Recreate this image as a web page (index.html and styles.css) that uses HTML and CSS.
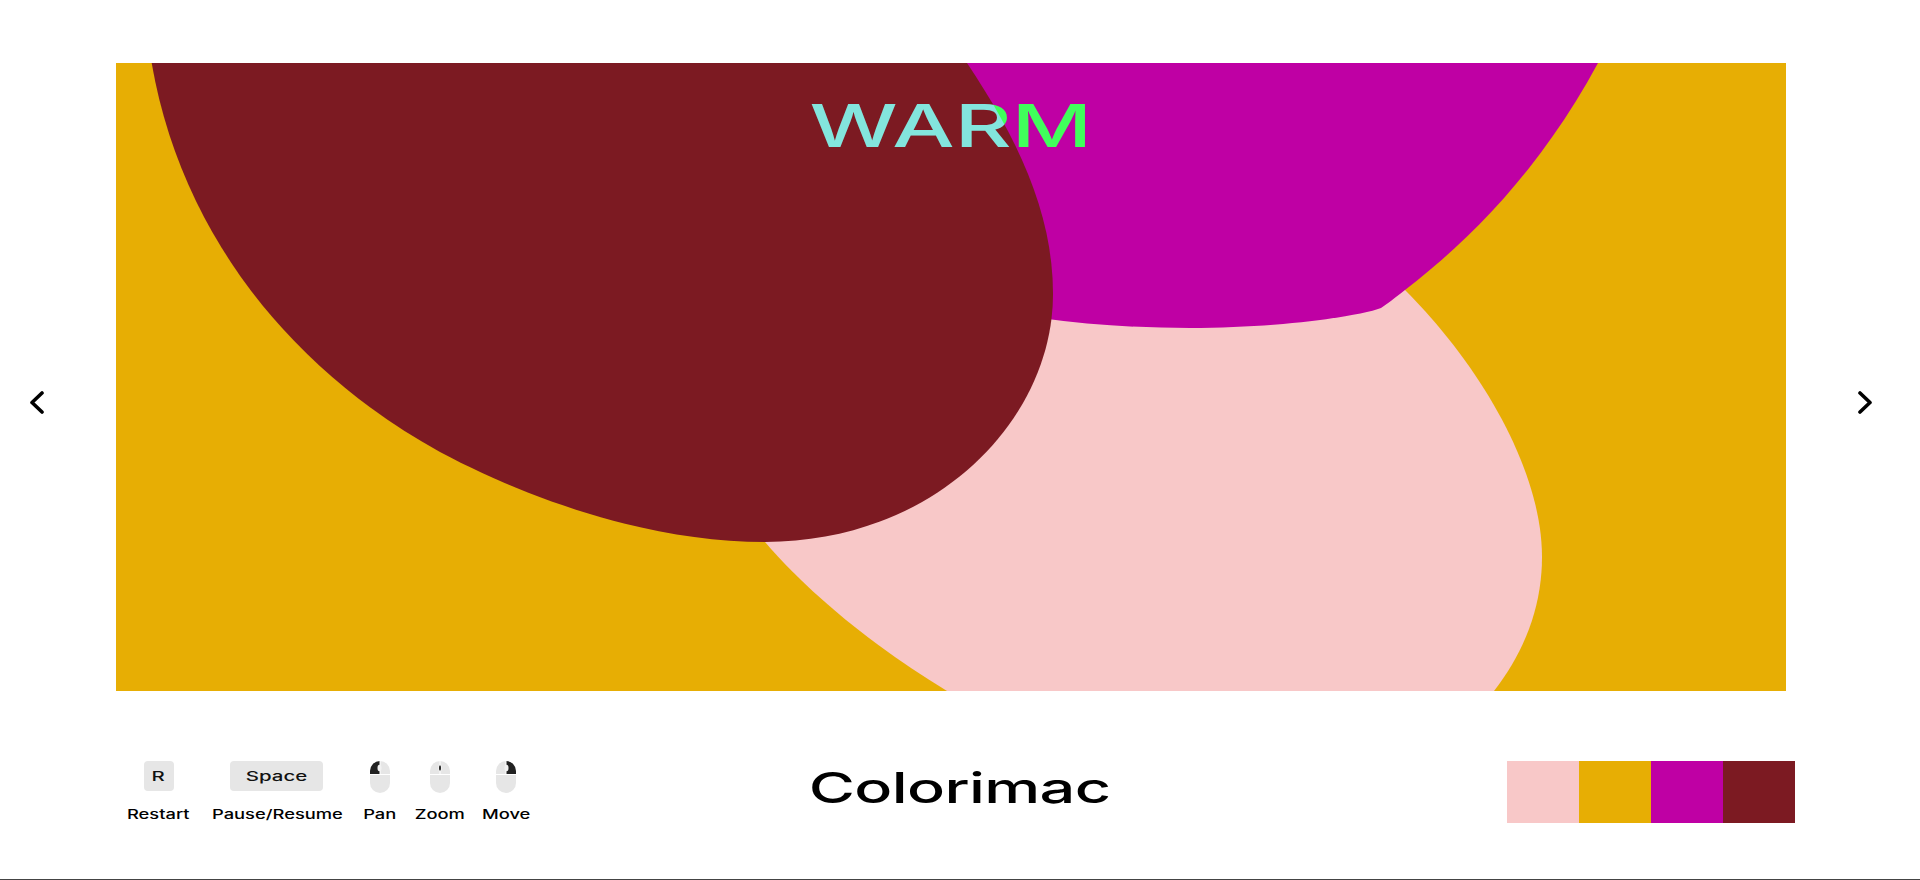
FILE: index.html
```html
<!DOCTYPE html>
<html lang="en">
<head>
    <meta charset="UTF-8">
    <meta name="viewport" content="width=device-width, initial-scale=1.0">
    <title>Colorimac</title>
    <link rel="stylesheet" href="styles.css">
</head>
<body>
    <div id="page">
        <div class="stage">
            <button class="arrow arrow-left" aria-label="Previous">
                <svg width="14" height="23" viewBox="0 0 14 23"><polyline points="12,2 2,11.5 12,21"/></svg>
            </button>
            <div class="canvas">
                <svg class="shapes" viewBox="116 63 1670 628" width="1670" height="628">
                    <path class="pink" d="M1405 290 C1480 365 1542 470 1542 557 C1542 610 1522 655 1494 691 H947 C880 650 815 600 765 542 L1052 290 Z"/>
                    <path class="magenta" d="M960 63 H1598 C1540 170 1470 240 1405 290 C1397 296 1390 302 1381 308 C1360 316 1280 328 1190 328 C1140 328 1090 325 1040 318 Z"/>
                    <path class="red" d="M151.7 63 C181 233 290 369 440 452 C530 500 650 542 765 542 C935 542 1053 420 1053 294 C1053 210 1015 135 967 63 Z"/>
                </svg>
                <div class="title"><span>WARM</span></div>
            </div>
            <button class="arrow arrow-right" aria-label="Next">
                <svg width="14" height="23" viewBox="0 0 14 23"><polyline points="2,2 12,11.5 2,21"/></svg>
            </button>
        </div>

        <div class="footer">
            <div class="controls">
                <div class="control c-restart">
                    <div class="key key-r"><span>R</span></div>
                    <div class="label"><span>Restart</span></div>
                </div>
                <div class="control c-pause">
                    <div class="key key-space"><span>Space</span></div>
                    <div class="label"><span>Pause/Resume</span></div>
                </div>
                <div class="control c-pan">
                    <svg class="mouse" width="20" height="32" viewBox="0 0 20 32">
                        <rect class="body" width="20" height="32" rx="10"/>
                        <path class="dark" d="M10 0 A10 10 0 0 0 0 10 V13 H10 Z"/>
                        <path class="split" d="M0 13.5 H20 M10 0 V13"/>
                        <ellipse class="wheel" cx="9.5" cy="7" rx="2" ry="3.2"/>
                    </svg>
                    <div class="label"><span>Pan</span></div>
                </div>
                <div class="control c-zoom">
                    <svg class="mouse" width="20" height="32" viewBox="0 0 20 32">
                        <rect class="body" width="20" height="32" rx="10"/>
                        <path class="split" d="M0 13.5 H20 M10 0 V13"/>
                        <ellipse class="wheel" cx="10" cy="7" rx="2" ry="3.2"/>
                        <ellipse class="dark" cx="10" cy="7" rx="1" ry="2.7"/>
                    </svg>
                    <div class="label"><span>Zoom</span></div>
                </div>
                <div class="control c-move">
                    <svg class="mouse" width="20" height="32" viewBox="0 0 20 32">
                        <rect class="body" width="20" height="32" rx="10"/>
                        <path class="dark" d="M10 0 A10 10 0 0 1 20 10 V13 H10 Z"/>
                        <path class="split" d="M0 13.5 H20 M10 0 V13"/>
                        <ellipse class="wheel" cx="10.5" cy="7" rx="2" ry="3.2"/>
                    </svg>
                    <div class="label"><span>Move</span></div>
                </div>
            </div>

            <div class="name"><span>Colorimac</span></div>

            <div class="palette">
                <div class="swatch s-pink"></div>
                <div class="swatch s-yellow"></div>
                <div class="swatch s-magenta"></div>
                <div class="swatch s-red"></div>
            </div>
        </div>
    </div>
</body>
</html>
```

FILE: styles.css
```css
html,
body{
    margin: 0;
    background-color: #fff;
    overflow: hidden;
}
body{
    font-family: Inter, "Liberation Sans", sans-serif;
    color: #000;
}
#page{
    height: 879px;
    border-bottom: 1px solid #444;
    overflow: hidden;
}
.stage{
    display: flex;
    align-items: center;
    padding-top: 63px;
}
.arrow{
    display: flex;
    align-items: center;
    border: none;
    background: none;
    padding: 0;
    height: 23px;
    margin-top: 51px;
}
.arrow polyline{
    fill: none;
    stroke: #000;
    stroke-width: 3.6;
    stroke-linecap: round;
    stroke-linejoin: round;
}
.arrow-left{
    width: 116px;
    padding-left: 30px;
    box-sizing: border-box;
}
.arrow-right{
    width: 134px;
    padding-left: 72px;
    box-sizing: border-box;
}
.canvas{
    width: 1670px;
    height: 628px;
    background-color: #e7ae04;
    position: relative;
    isolation: isolate;
    overflow: hidden;
}
.shapes{
    display: block;
}
.pink{
    fill: #f8c8c8;
}
.magenta{
    fill: #bf00a4;
}
.red{
    fill: #7c1a22;
}
.title{
    position: absolute;
    top: 41px;
    left: 0;
    right: 0;
    height: 43px;
    display: flex;
    justify-content: center;
    align-items: center;
    color: #fff;
    mix-blend-mode: difference;
    font-size: 59px;
    font-weight: 500;
    line-height: 43px;
}
.title span{
    display: inline-block;
    transform: scaleX(1.49);
}
.footer{
    display: grid;
    grid-template-columns: 1fr auto 1fr;
    align-items: start;
    padding: 70px 125px 0;
}
.controls{
    display: flex;
    gap: 19px;
}
.control{
    display: flex;
    flex-direction: column;
    align-items: center;
}
.c-restart{ width: 67px; }
.c-pause{ width: 133px; }
.c-pan{ width: 33px; }
.c-zoom{ width: 49px; }
.c-move{ width: 46px; }
.key{
    height: 30px;
    background-color: #e6e6e6;
    border-radius: 4px;
    display: flex;
    align-items: center;
    justify-content: center;
    font-size: 13px;
    font-weight: 500;
    color: #111;
}
.key span{
    display: inline-block;
    transform: scaleX(1.57);
}
.label span{
    display: inline-block;
    white-space: nowrap;
    transform: scaleX(1.41);
}
.key-r{
    width: 30px;
}
.key-space{
    width: 93px;
    margin-right: 2px;
}
.mouse{
    display: block;
    height: 32px;
}
.mouse .body{
    fill: #e6e6e6;
}
.mouse .dark{
    fill: #222;
}
.mouse .split{
    fill: none;
    stroke: #fff;
    stroke-width: 1;
}
.mouse .wheel{
    fill: #f2f2f2;
}
.label{
    margin-top: 15px;
    font-size: 13px;
    font-weight: 500;
    line-height: 16px;
    height: 16px;
}
.c-pan .label,
.c-zoom .label,
.c-move .label{
    margin-top: 13px;
}
.name{
    font-size: 42px;
    font-weight: 500;
    letter-spacing: -0.01em;
    line-height: 54px;
    white-space: nowrap;
    width: 297px;
    text-align: center;
}
.name span{
    display: inline-block;
    transform: scaleX(1.5);
}
.palette{
    display: flex;
    justify-self: end;
}
.swatch{
    width: 72px;
    height: 62px;
}
.s-pink{
    background-color: #f8c8c8;
}
.s-yellow{
    background-color: #e7ae04;
}
.s-magenta{
    background-color: #bf00a4;
}
.s-red{
    background-color: #7c1a22;
}
```
